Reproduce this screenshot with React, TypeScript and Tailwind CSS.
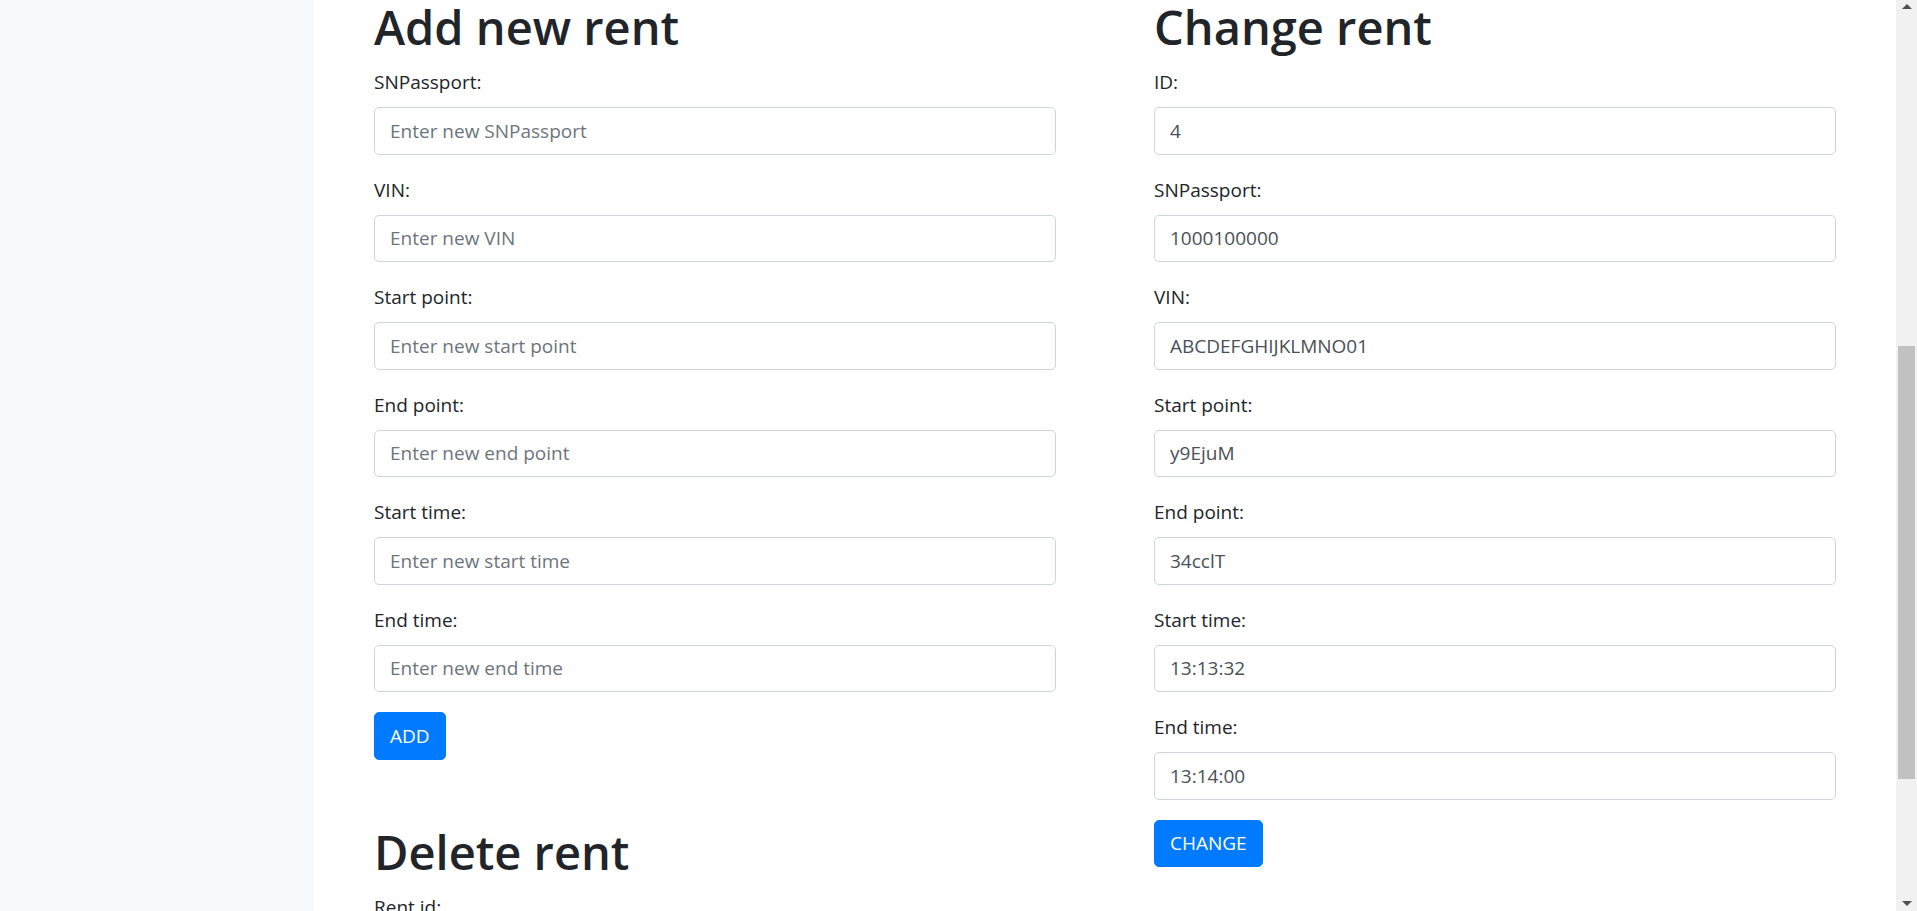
import React from "react";

type FieldProps = {
  label: string;
  placeholder?: string;
  value?: string;
};

function Field({ label, placeholder, value }: FieldProps) {
  return (
    <div className="mb-[20px]">
      <label className="block mb-[10px] text-[19px] leading-[30px] text-[#212529]">{label}</label>
      <input
        type="text"
        placeholder={placeholder}
        defaultValue={value}
        className="block w-full h-[47.5px] px-[15px] text-[19px] leading-[30px] text-[#495057] placeholder:text-[#6c757d] bg-white border border-[#ced4da] rounded-[5px] outline-none"
      />
    </div>
  );
}

function Button({ children }: { children: React.ReactNode }) {
  return (
    <button className="h-[47.5px] px-[15px] text-[19px] leading-[30px] text-white bg-[#007bff] border border-[#007bff] rounded-[5px]">
      {children}
    </button>
  );
}

function Heading({ children, className = "" }: { children: React.ReactNode; className?: string }) {
  return (
    <h1 className={"text-[47px] leading-[60px] font-semibold text-[#212529] mb-[10px] " + className}>{children}</h1>
  );
}

function Scrollbar() {
  return (
    <div className="w-[21px] shrink-0 bg-[#f1f1f1] flex flex-col items-center">
      <div className="h-[21px] w-full flex justify-center pt-[4px]">
        <div className="w-0 h-0 border-l-[5px] border-r-[5px] border-b-[5px] border-l-transparent border-r-transparent border-b-[#505050]" />
      </div>
      <div className="flex-1 w-full px-[2px]">
        <div className="mt-[325px] h-[433px] bg-[#c1c1c1]" />
      </div>
      <div className="h-[21px] w-full flex justify-center items-end pb-[5px]">
        <div className="w-0 h-0 border-l-[5px] border-r-[5px] border-t-[5px] border-l-transparent border-r-transparent border-t-[#505050]" />
      </div>
    </div>
  );
}

export default function App() {
  return (
    <div
      className="flex h-[911px] overflow-hidden bg-white"
      style={{ fontFamily: '"Segoe UI", "Open Sans", "Noto Sans", sans-serif' }}
    >
      <aside className="w-[314px] shrink-0 bg-[#f8f9fa]" />
      <main className="flex-1 flex gap-[98px] px-[60px] -mt-[3px]">
        <section className="w-[682px]">
          <Heading>Add new rent</Heading>
          <form>
            <Field label="SNPassport:" placeholder="Enter new SNPassport" />
            <Field label="VIN:" placeholder="Enter new VIN" />
            <Field label="Start point:" placeholder="Enter new start point" />
            <Field label="End point:" placeholder="Enter new end point" />
            <Field label="Start time:" placeholder="Enter new start time" />
            <Field label="End time:" placeholder="Enter new end time" />
            <Button>ADD</Button>
          </form>
          <Heading className="mt-[62.5px]">Delete rent</Heading>
          <Field label="Rent id:" placeholder="Enter rent id" />
        </section>
        <section className="w-[682px]">
          <Heading>Change rent</Heading>
          <form>
            <Field label="ID:" value="4" />
            <Field label="SNPassport:" value="1000100000" />
            <Field label="VIN:" value="ABCDEFGHIJKLMNO01" />
            <Field label="Start point:" value="y9EjuM" />
            <Field label="End point:" value="34cclT" />
            <Field label="Start time:" value="13:13:32" />
            <Field label="End time:" value="13:14:00" />
            <Button>CHANGE</Button>
          </form>
        </section>
      </main>
      <Scrollbar />
    </div>
  );
}
